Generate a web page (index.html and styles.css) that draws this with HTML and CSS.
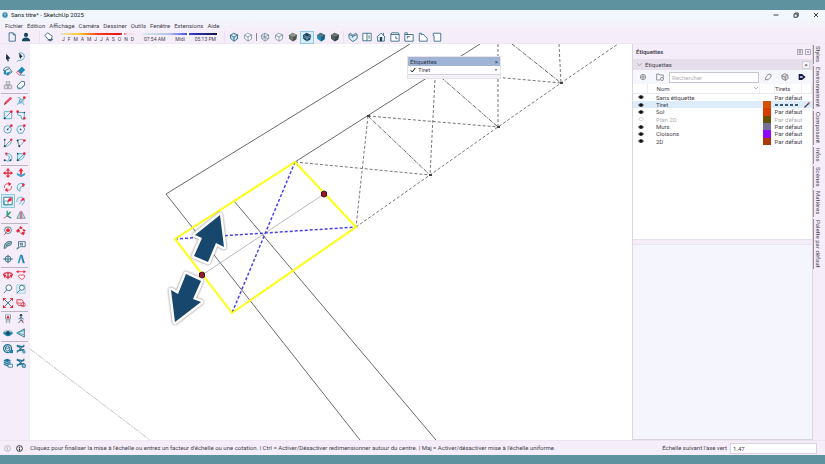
FILE: index.html
```html
<!DOCTYPE html>
<html lang="fr">
<head>
<meta charset="utf-8">
<title>Sans titre* - SketchUp 2025</title>
<link rel="stylesheet" href="styles.css">
</head>
<body>
<div class="window">
  <header class="titlebar">
    <svg class="logo" viewBox="0 0 12 12"><circle cx="6" cy="6" r="6" fill="#7fb4cb"/><path d="M6 1 10 3.500v5L6 11 2 8.500v-5z" fill="#1f7da6"/><path d="M3.500 4.500 6 3l2.500 1.500L6 6zM4 7l2 1.500L8 7" fill="none" stroke="#e8f6fc"/></svg>
    <h1>Sans titre* - SketchUp 2025</h1>
    <div class="window-buttons">
      <button aria-label="Réduire"><svg viewBox="0 0 12 12"><path d="M1 6h10" class="k"/></svg></button>
      <button aria-label="Restaurer"><svg viewBox="0 0 12 12"><path d="M2 4h6.500v6.500H2zM4 4V2h6.500v6.500H8.500" class="k"/></svg></button>
      <button aria-label="Fermer"><svg viewBox="0 0 12 12"><path d="m2 2 8 8m0-8-8 8" class="k"/></svg></button>
    </div>
  </header>

  <nav class="menubar">
    <button>Fichier</button><button>Édition</button><button>Affichage</button><button>Caméra</button><button>Dessiner</button><button>Outils</button><button>Fenêtre</button><button>Extensions</button><button>Aide</button>
  </nav>

  <div class="toolbar">
    <div class="group files">
      <button aria-label="Nouveau"><svg viewBox="0 0 12 12"><path d="M2.500 1h5l2.500 2.500V11H2.500zM7.500 1v2.500H10" class="n"/></svg></button>
      <button aria-label="Compte"><svg viewBox="0 0 12 12"><circle cx="6" cy="3.500" r="2.500" class="nf"/><path d="M1 11c0-3 2-4.500 5-4.500s5 1.500 5 4.500z" class="nf"/></svg></button>
    </div>
    <div class="group shadows">
      <button aria-label="Ombres"><svg viewBox="0 0 12 12"><path d="m4 10 4 1.500 3-2.500-3-3z" fill="#5d6f7d"/><path d="m1 4 3.500-3L10 5 8.500 9 5 9z" class="n" fill="#fff"/></svg></button>
      <div class="scale">
        <div class="ramp months"><i></i></div>
        <div class="ticks"><span>J</span><span>F</span><span>M</span><span>A</span><span>M</span><span>J</span><span>J</span><span>A</span><span>S</span><span>O</span><span>N</span><span>D</span></div>
      </div>
      <div class="scale hours-scale">
        <div class="ramp hours"><i></i></div>
        <div class="ticks"><span>07:54 AM</span><span>Midi</span><span>05:13 PM</span></div>
      </div>
    </div>
    <div class="group faces">
      <button aria-label="Rayons X"><svg viewBox="0 0 12 12"><path d="m1.500 4 4-2.500 5 2-.5 5-4 2.500-4-3zM1.500 4l4.500 2 4.500-2.500M6 6v5" class="n" fill="#bfe0ee"/></svg></button>
      <button aria-label="Arêtes arrière"><svg viewBox="0 0 12 12"><path d="m1.500 4 4-2.500 5 2-.5 5-4 2.500-4-3zM1.500 4l4.500 2 4.500-2.500M6 6v5" class="g" fill="#fff"/></svg></button>
      <span class="bar"></span>
      <button aria-label="Fil de fer"><svg viewBox="0 0 12 12"><path d="m1.500 4 4-2.500 5 2-.5 5-4 2.500-4-3zM1.500 4l4.500 2 4.500-2.500M6 6v5M5.500 1.500v5l-3 1.500m3-1.500L10 8.500" class="g"/></svg></button>
      <button aria-label="Lignes cachées"><svg viewBox="0 0 12 12"><path d="m1.500 4 4-2.500 5 2-.5 5-4 2.500-4-3zM1.500 4l4.500 2 4.500-2.500M6 6v5" class="g" fill="#fff"/></svg></button>
      <button aria-label="Ombré"><svg viewBox="0 0 12 12"><path d="m1 4 4.500-3L11 3.500 10 9l-4 2.500L1.500 8z" fill="#4b5654"/><path d="m1 4 4.500-3L11 3.500 6 6z" fill="#8e9990"/><path d="M6 6v5.500L1.500 8 1 4z" fill="#6c756c"/></svg></button>
      <button class="on" aria-label="Ombré avec textures"><svg viewBox="0 0 12 12"><path d="m1 4 4.500-3L11 3.500 10 9l-4 2.500L1.500 8z" fill="#173f5a"/><path d="m2 4 4 2 4.500-2.300M6 6v5M2 6l4 2 4-2" fill="none" stroke="#7fa9c0"/></svg></button>
      <button aria-label="Monochrome"><svg viewBox="0 0 12 12"><path d="m1 4 4.500-3L11 3.500 10 9l-4 2.500L1.500 8z" fill="#1f8cc0"/><path d="m1 4 4.500-3L11 3.500 6 6z" fill="#5d7582"/><path d="M6 6v5.500l4-2.500 1-5.500z" fill="#235d7d"/></svg></button>
      <button aria-label="Style photo"><svg viewBox="0 0 12 12"><path d="m1 4 4.500-3L11 3.500 10 9l-4 2.500L1.500 8z" fill="#35444b"/><path d="m1 4 4.500-3L11 3.500 6 6z" fill="#6a7775"/><path d="M6 6v5.500L1.500 8 1 4z" fill="#525d5d"/></svg></button>
    </div>
    <div class="group views">
      <button aria-label="Iso"><svg viewBox="0 0 12 12"><path d="M1 3 6 5l5-2v5l-5 3.500L1.500 8zM1 3l2-1.500L6 4l3-2.500L11 3M6 5l-1 2" class="n" fill="#dcecf4"/></svg></button>
      <button aria-label="Dessus"><svg viewBox="0 0 12 12"><path d="M1 1.500h10v9H1zM6 1.500v9M8.500 4v4" class="n" fill="#fff"/></svg></button>
      <button aria-label="Face"><svg viewBox="0 0 12 12"><path d="M1 6 6 1.500 11 6M2 5.500V11h8V5.500M9 1v2.500" class="n" fill="#fff"/><path d="M4.500 6h3v5h-3z" class="nf"/></svg></button>
      <button aria-label="Droite"><svg viewBox="0 0 12 12"><path d="M1 3h10v8H1zM1 3l1-2h8l1 2M7 5v3h2" class="n" fill="#fff"/></svg></button>
      <button aria-label="Arrière"><svg viewBox="0 0 12 12"><path d="M1 3h10v8H1zM1 3V1h3v2M7 5.500H4V8" class="n" fill="#fff"/></svg></button>
      <button aria-label="Gauche"><svg viewBox="0 0 12 12"><path d="M1.500 11V1.500H4v2l2-1 5 5V11z" class="n" fill="#fff"/></svg></button>
      <button aria-label="Dessous"><svg viewBox="0 0 12 12"><path d="M2.500 4.500V11h8V1.500h-9v3z" class="n" fill="#fff"/></svg></button>
    </div>
  </div>

  <main class="body">
    <aside class="tools">
      <div class="toolset">
        <button aria-label="Sélectionner"><svg viewBox="0 0 12 12"><path d="m4 2 5 6-2.500.2L7 11l-1.500.3-.5-2.500L3.500 9z" fill="#172f44"/></svg></button>
        <button aria-label="Lasso"><svg viewBox="0 0 12 12"><path d="M9 3c3 4-1 7-4 7-2 0-3 1-4 1.500M3 2c2-2 6-1 7 2" class="c"/><path d="m4 1 4 5-2 .3-.3 2L4 6z" fill="#172f44"/></svg></button>
        <button aria-label="Colorier"><svg viewBox="0 0 12 12"><path d="m3 5 5-2 3 4-5 4-3-1z" class="n" fill="#e4f2f8"/><path d="m4 8 6-2-4 5-2-1z" fill="#2f8db4"/><path d="M1 6c-1-4 4-6 7-4" class="n"/><path d="M1 5h2v5H1z" fill="#168db6"/></svg></button>
        <button aria-label="Effacer"><svg viewBox="0 0 12 12"><path d="m2 6 5-5 4 3.500L6 10z" fill="#168db6"/><path d="m2 6 4 4-2 1-3-3z" fill="#fff" class="r"/><path d="M5 11h6" class="c"/></svg></button>
        <button aria-label="Composant"><svg viewBox="0 0 12 12"><path d="M4 2h4v4H4zM1.500 6H6v4.500H1.500zM6 6h4.500v4.500H6z" fill="#dddbe2" stroke="#9f9da5"/></svg></button>
        <button aria-label="Étiqueter"><svg viewBox="0 0 12 12"><path d="m1.500 7 5-5.500L10 2l.5 4L6 10.500H2.500z" class="n" fill="#fff"/><path d="m2 9 4 1 4-4" class="c"/></svg></button>
      </div>
      <div class="toolset">
        <button aria-label="Ligne"><svg viewBox="0 0 12 12"><path d="m1 11 1.500-4L9 1l2 2-6.500 6z" fill="#e6536b"/><path d="m1 11 1.500-3.500L4 9z" fill="#75434c"/></svg></button>
        <button aria-label="Main levée"><svg viewBox="0 0 12 12"><path d="M2 2c8 0-2 6 4 5s-1 3 4 3M1 10c5-1 1-7 6-6" class="c"/><path d="m4 8 5-6 2 1-5 6-3 1z" fill="#7fb9cd"/><circle cx="10" cy="2" r="1.600" class="rf"/></svg></button>
        <button aria-label="Rectangle"><svg viewBox="0 0 12 12"><path d="M1.500 2h9v8.500h-9zM2 10l8-8" class="c"/><circle cx="10" cy="2" r="1.600" class="rf"/><circle cx="2" cy="10" r="1.200" class="nf"/></svg></button>
        <button aria-label="Rectangle pivoté"><svg viewBox="0 0 12 12"><path d="M2 3h8v7M2 3v3l4 1 1 4h3" class="c"/><circle cx="2" cy="2" r="1.600" class="rf"/><circle cx="10" cy="10" r="1.500" class="rf"/><circle cx="10" cy="3" r="1" class="nf"/></svg></button>
        <button aria-label="Cercle"><svg viewBox="0 0 12 12"><circle cx="5.500" cy="6.500" r="4.500" class="c"/><path d="m5.500 6.500 4-4" class="c"/><circle cx="10" cy="2" r="1.600" class="rf"/><circle cx="5.500" cy="6.500" r="1" class="nf"/></svg></button>
        <button aria-label="Polygone"><svg viewBox="0 0 12 12"><path d="m3 2.500 5-.5 2.500 4L8 11H3L1 6.500z" class="c"/><circle cx="10" cy="2" r="1.600" class="rf"/><circle cx="5.500" cy="6.500" r="1" class="nf"/></svg></button>
        <button aria-label="Arc"><svg viewBox="0 0 12 12"><path d="M2 2v8l8-8" class="g"/><path d="M10 3c0 4-3 7-8 7" class="c"/><circle cx="10" cy="2" r="1.400" class="rf"/><circle cx="2" cy="2" r="1" class="nf"/><circle cx="2" cy="10" r="1.200" class="nf"/></svg></button>
        <button aria-label="Arc par 2 points"><svg viewBox="0 0 12 12"><path d="M1.500 3C5 1 9 1 10 4L4 10zM1.500 3 4 10" class="g"/><circle cx="10" cy="3" r="1.600" class="rf"/><circle cx="2" cy="3" r="1.200" class="nf"/><circle cx="4" cy="10" r="1.200" class="nf"/></svg></button>
        <button aria-label="Arc par 3 points"><svg viewBox="0 0 12 12"><path d="M4 2c6-1 9 6 5 8M2 10c3 1 5 1 7 0M4 4c4 0 5 4 2 5" class="c"/><circle cx="4" cy="2" r="1.400" class="rf"/><circle cx="2" cy="10" r="1.200" class="nf"/><circle cx="9" cy="10" r="1.200" class="nf"/></svg></button>
        <button aria-label="Secteur"><svg viewBox="0 0 12 12"><path d="M2 2v8l8-8zM10 3c0 4-3 7-8 7" class="c" fill="#d7eef6"/><circle cx="10" cy="2" r="1.600" class="rf"/><circle cx="2" cy="10" r="1.200" class="nf"/><circle cx="2" cy="2" r="1" class="nf"/></svg></button>
      </div>
      <div class="toolset">
        <button aria-label="Déplacer"><svg viewBox="0 0 12 12"><path d="m6 0 2.500 3h-5zM6 12 3.500 9h5zM0 6l3-2.500v5zM12 6 9 8.500v-5z" class="rf"/><path d="M6 2v8M2 6h8" fill="none" stroke="#ed2338" stroke-width="1.500"/></svg></button>
        <button aria-label="Pousser"><svg viewBox="0 0 12 12"><path d="m1 6 5 2 5-2v2.500L6 11 1 8.500z" fill="#3aa7c9"/><path d="m6 0 3 4H7v4H5V4H3z" class="rf"/></svg></button>
        <button aria-label="Pivoter"><svg viewBox="0 0 12 12"><path d="M2 7c-1-3 1-5 5-5M10 5c1 3-1 5-5 5" class="r"/><path d="m6 0 4 2-3 3zM6 12 2 10l3-3z" class="rf"/></svg></button>
        <button aria-label="Suivez-moi"><svg viewBox="0 0 12 12"><path d="M10 2C4 0 0 4 2 9l3 2c-1-5 1-6 5-6" class="c" fill="#e1f4fa"/><path d="M7 1.500 11 3 8 6z" class="rf"/></svg></button>
        <button class="on" aria-label="Échelle"><svg viewBox="0 0 12 12"><path d="M1 1.500h10v9H1z" class="n" fill="#fff"/><path d="M1.500 6H6v4.500H1.500z" class="c"/><path d="m5 7 2-4 3-1 .5 3-3 2z" class="rf"/></svg></button>
        <button aria-label="Décalage"><svg viewBox="0 0 12 12"><path d="M1 7c0-8 10-7 9 0l-3 4M4 10c2-3 4-4 1-5" class="c"/><path d="m6 6 1-3 3-1v3z" class="rf"/></svg></button>
        <button aria-label="Axes"><svg viewBox="0 0 12 12"><path d="M5 1v6l5 3" fill="none" stroke="#28839f" stroke-width="1.500"/><path d="m5 7 4-5" stroke="#37a85b" stroke-width="2"/><path d="M5 7 1 10" class="r"/></svg></button>
        <button aria-label="Symétrie"><svg viewBox="0 0 12 12"><path d="M5 2v8H1zM7 2v8h4z" class="g" fill="#c5dce6"/><path d="M6 1v10" class="r"/></svg></button>
      </div>
      <div class="toolset">
        <button aria-label="Mètre"><svg viewBox="0 0 12 12"><circle cx="6" cy="5" r="4" class="n" fill="#fff"/><circle cx="6" cy="5" r="2.300" class="rf"/><path d="m1 11 3-3" class="r"/></svg></button>
        <button aria-label="Cotation"><svg viewBox="0 0 12 12"><path d="m2 5 3-3 5 3M3 6l4 4 3-3" class="g"/><path d="m0 6 3-3 2 3-3 2zM9 11 6 9l2-2 3 1zM5 0l3 2-2 2-2-2zM9 4l3 1-2 2-2-1z" class="rf"/></svg></button>
        <button aria-label="Rapporteur"><svg viewBox="0 0 12 12"><path d="M1.500 10C1 4 5 1 10 2c1 4-2 5-4 5s-2 4-4.500 3z" class="n" fill="#9db6c2"/><path d="M4 7c1-2 2-3 4-3" class="n"/></svg></button>
        <button aria-label="Texte"><svg viewBox="0 0 12 12"><path d="M3 2h8v6H5l-4 3 2-3zM5 4v2h3V4z" class="n" fill="#fff"/></svg></button>
        <button aria-label="Plan de section"><svg viewBox="0 0 12 12"><circle cx="6" cy="6" r="3.500" class="n" fill="#dce8ed"/><path d="M0 6h12M6 1v10" class="n"/></svg></button>
        <button aria-label="Texte 3D"><svg viewBox="0 0 12 12"><path d="M2 11 5 1h2l3 10H8L6 4 4 11z" fill="#2d9fc4"/><path d="m7 1 3 10" class="n"/></svg></button>
      </div>
      <div class="toolset">
        <button aria-label="Orbite"><svg viewBox="0 0 12 12"><path d="M1 6c0-4 10-4 10 0M3 8c2 1 4 1 6 0M6 2v9" fill="none" stroke="#df3446" stroke-width="1.500"/><path d="m0 5 4 1-2 4zM12 5 8 6l2 4z" class="rf"/></svg></button>
        <button aria-label="Panoramique"><svg viewBox="0 0 12 12"><path d="M1 2h9" class="r"/><path d="m0 2 3-2v4zM12 2 9 0v4z" class="rf"/><path d="M4 6h6v3l-2 2H6L3 8z" class="r" fill="#fff"/></svg></button>
        <button aria-label="Zoom"><svg viewBox="0 0 12 12"><circle cx="7" cy="4.500" r="3.500" class="n" fill="#fff"/><path d="M4.500 7 1 11" class="n"/></svg></button>
        <button aria-label="Zoom fenêtre"><svg viewBox="0 0 12 12"><path d="M1 1h10v10H1z" fill="#e6f4f9" stroke="#94cddd"/><circle cx="7" cy="4.500" r="3" class="n" fill="#fff"/><path d="M5 7 1 11" class="n"/></svg></button>
        <button aria-label="Zoom étendu"><svg viewBox="0 0 12 12"><path d="m2 2 8 8M10 2l-8 8" class="n"/><path d="M0 0h4L0 4zM12 0v4L8 0zM0 12V8l4 4zM12 12H8l4-4z" class="rf"/></svg></button>
        <button aria-label="Précédent"><svg viewBox="0 0 12 12"><path d="M1 2h6l2 3v4H3L1 6zM1 6h5" class="r" fill="#f6e6ef"/><circle cx="8.500" cy="8" r="2.500" class="r"/></svg></button>
      </div>
      <div class="toolset">
        <button aria-label="Caméra"><svg viewBox="0 0 12 12"><path d="M3 1h6v5H3zM4 6v5M8 6v5M6 6v4" class="g" fill="#fff"/><circle cx="6" cy="4" r="1.600" class="rf"/></svg></button>
        <button aria-label="Marcher"><svg viewBox="0 0 12 12"><circle cx="6" cy="1.500" r="1.500" class="nf"/><path d="M6 3v4l3 4M6 7l-3 4M3 6l3-2 3 2" class="n"/><path d="M8 7v3" class="r"/></svg></button>
        <button aria-label="Pivoter la caméra"><svg viewBox="0 0 12 12"><path d="M0 6c3-5 9-5 12 0-3 5-9 5-12 0z" fill="#1884ae"/><path d="M1 5c3-4 7-4 10 0z" fill="#b8cbd4"/><circle cx="6" cy="6" r="2.300" class="nf"/></svg></button>
        <button aria-label="Section"><svg viewBox="0 0 12 12"><path d="M10 1v10L1 6z" class="n" fill="#d8edf5"/><path d="m1 6 9-3M1 6l9 2" class="c"/></svg></button>
      </div>
      <div class="toolset">
        <button aria-label="3D Warehouse"><svg viewBox="0 0 12 12"><circle cx="5.500" cy="5.500" r="4.800" fill="#d5e9f1" stroke="#206e93" stroke-width="1.400"/><path d="m3 4 2.500-1.500L8 4v3L5.500 8.500 3 7zM3 4l2.500 1.500L8 4" class="n"/><path d="M8 7h4v4H8z" fill="#1a83ad"/></svg></button>
        <button aria-label="Extension Warehouse"><svg viewBox="0 0 12 12"><path d="m1 1 9 9M10 1 1 10M1 3c3-2 6 1 9 0M1 8c4 1 6-2 9-1" fill="none" stroke="#246f92" stroke-width="1.500"/><circle cx="9.500" cy="9.500" r="2" fill="#4d9fbf"/></svg></button>
        <button aria-label="Partager"><svg viewBox="0 0 12 12"><path d="M1 2.500 5 1l4 1.500v6L5 10 1 8.500z" fill="#247598"/><path d="m1 4 4 1.500L9 4M1 6.500 5 8l4-1.500" fill="none" stroke="#a9d2e3"/><path d="M6 7.500h5.500v3.500H6z" fill="#fff" stroke="#2a759b"/></svg></button>
        <button aria-label="Gestionnaire d'extensions"><svg viewBox="0 0 12 12"><path d="m1 1 9 9M10 1 1 10M1 3c3-2 6 1 9 0M1 8c4 1 6-2 9-1" fill="none" stroke="#246f92" stroke-width="1.500"/><circle cx="9.500" cy="9.500" r="2.300" fill="#8cb9cc" stroke="#2f7999"/></svg></button>
      </div>
    </aside>

    <section class="canvas">
      <svg class="model" viewBox="30 44 602 396" preserveAspectRatio="xMinYMin slice">
        <g class="edge">
          <path d="M410 44 166 194 360 440"/>
          <path d="m234 201 202 239"/>
          <path d="M295 162 480 44"/>
        </g>
        <g class="dashed">
          <path d="m295 162 135 13"/>
          <path d="m368 116-12 111"/>
          <path d="m368 116 130 11"/>
          <path d="m436 60-6 115"/>
          <path d="M498 44v83"/>
          <path d="m438 72 123 11"/>
          <path d="m559 44 2 39"/>
          <path d="m356 227 74-52 68-48 63-44 57-39"/>
        </g>
        <g class="dashdot">
          <path d="m368 116 62 59"/>
          <path d="m436 73 62 54"/>
          <path d="m512 44 49 39"/>
        </g>
        <path class="node" d="M367 115h3v2h-3zM429 174h3v2h-3zM497 126h3v2h-3zM560 82h3v2h-3z"/>
        <path class="guide" d="m30 349 120 91"/>
        <path class="axis" d="m202 275 122-81"/>
        <path class="inner" d="m175 239 181-12M295 162l-63 151"/>
        <path class="selection" d="m175 239 120-77 61 65-124 86z"/>
        <g class="handle">
          <path d="m324 191 2.500 1v4l-2.500 1-2.500-1v-4z"/>
          <path d="m202 272 2.500 1v4l-2.500 1-2.500-1v-4z"/>
        </g>
        <g class="arrow">
          <path d="m220 215 4 32-8-4-8 19-14-6 8-18-7-3z"/>
          <path d="m186 274 15 7-8 18 8 3-26 20-4-32 7 4z"/>
        </g>
      </svg>

      <div class="floating">
        <div class="floating-title"><span>Étiquettes</span><button aria-label="Fermer la palette">×</button></div>
        <div class="floating-field">
          <svg viewBox="0 0 12 12"><path d="m1.500 6.500 3 3.500 6-8" fill="none" stroke="#111" stroke-width="2"/></svg>
          <select aria-label="Étiquette active"><option>Tiret</option></select>
          <svg class="caret" viewBox="0 0 12 12"><path d="M2 4h8L6 9z" fill="#555"/></svg>
        </div>
      </div>
    </section>

    <aside class="tray">
      <div class="tray-title">
        <h2>Étiquettes</h2>
        <button aria-label="Épingler"><svg viewBox="0 0 12 12"><path d="M1 1h10v10H1zM4 3h4v4H4zM6 7v3" class="k"/></svg></button>
        <button aria-label="Fermer le panneau"><svg viewBox="0 0 12 12"><path d="M1 1h10v10H1zM4 4l4 4M8 4 4 8" class="k"/></svg></button>
      </div>
      <div class="tray-section">
        <svg viewBox="0 0 12 12"><path d="m1 3 5 6 5-6" class="k"/></svg>
        <h3>Étiquettes</h3>
        <button aria-label="Fermer la section">×</button>
      </div>
      <div class="tray-tools">
        <button aria-label="Ajouter"><svg viewBox="0 0 12 12"><circle cx="6" cy="6" r="4" class="k"/><path d="M6 3v6M3 6h6" class="k"/></svg></button>
        <button aria-label="Ajouter un dossier"><svg viewBox="0 0 12 12"><path d="M6 10.500H1v-9h3.500l1 1.500H11v4" class="k"/><circle cx="9" cy="9" r="2.300" class="k"/></svg></button>
        <input type="search" placeholder="Rechercher" aria-label="Rechercher">
        <button aria-label="Étiqueter"><svg viewBox="0 0 12 12"><path d="m2 8 4-6h4.500v4L6 10H3zM1 11l2-2" class="k"/></svg></button>
        <button aria-label="Couleur par étiquette"><svg viewBox="0 0 12 12"><path d="m1 4 4-3 5 2 1 5-4 3-5-2z" fill="#ddd"/><path d="m1 4 4-3 5 2 1 5-4 3-5-2zM1 4l5 2 4-3M6 6l1 5" class="k"/></svg></button>
        <button aria-label="Détails"><svg viewBox="0 0 12 12"><path d="M1 1.500h5L11.500 6 6 10.500H1z" fill="#151a48"/><path d="M3 6h4" stroke="#fff" stroke-width="2"/></svg></button>
      </div>
      <div class="tag-list">
        <table>
          <thead><tr><th class="eye"></th><th class="name"><span>Nom <svg viewBox="0 0 12 12"><path d="m2 4 4 4 4-4" class="k"/></svg></span></th><th class="color"></th><th class="dash">Tirets</th><th class="pen"></th></tr></thead>
          <tbody>
            <tr><td><svg viewBox="0 0 12 12"><path d="M0 6c3-5 9-5 12 0-3 5-9 5-12 0z" fill="#555"/><circle cx="6" cy="6" r="3" fill="#111"/></svg></td><td>Sans étiquette</td><td></td><td>Par défaut</td><td></td></tr>
            <tr class="active"><td><svg viewBox="0 0 12 12"><path d="M0 6c3-5 9-5 12 0-3 5-9 5-12 0z" fill="#555"/><circle cx="6" cy="6" r="3" fill="#111"/></svg></td><td>Tiret</td><td class="orange"></td><td><div class="dash-sample"></div></td><td><svg class="pencil" viewBox="0 0 12 12"><path d="m1 11 9-9" stroke="#513a49" stroke-width="2.500"/><path d="m8 4 3-3" stroke="#c54152" stroke-width="2.500"/></svg></td></tr>
            <tr><td><svg viewBox="0 0 12 12"><path d="M0 6c3-5 9-5 12 0-3 5-9 5-12 0z" fill="#555"/><circle cx="6" cy="6" r="3" fill="#111"/></svg></td><td>Sol</td><td class="red"></td><td>Par défaut</td><td></td></tr>
            <tr class="hidden-tag"><td><svg viewBox="0 0 12 12"><path d="M1 6c3-4 7-4 10 0-3 4-7 4-10 0z" fill="none" stroke="#aaa"/></svg></td><td>Plan 2D</td><td class="olive"></td><td>Par défaut</td><td></td></tr>
            <tr><td><svg viewBox="0 0 12 12"><path d="M0 6c3-5 9-5 12 0-3 5-9 5-12 0z" fill="#555"/><circle cx="6" cy="6" r="3" fill="#111"/></svg></td><td>Murs</td><td class="slate"></td><td>Par défaut</td><td></td></tr>
            <tr><td><svg viewBox="0 0 12 12"><path d="M0 6c3-5 9-5 12 0-3 5-9 5-12 0z" fill="#555"/><circle cx="6" cy="6" r="3" fill="#111"/></svg></td><td>Cloisons</td><td class="violet"></td><td>Par défaut</td><td></td></tr>
            <tr><td><svg viewBox="0 0 12 12"><path d="M0 6c3-5 9-5 12 0-3 5-9 5-12 0z" fill="#555"/><circle cx="6" cy="6" r="3" fill="#111"/></svg></td><td>2D</td><td class="rust"></td><td>Par défaut</td><td></td></tr>
          </tbody>
        </table>
      </div>
      <div class="tray-rest"></div>
    </aside>

    <nav class="tabs">
      <button>Styles</button><button>Environnement</button><button>Composant</button><button>Infos</button><button>Scènes</button><button>Matières</button><button>Palette par défaut</button>
    </nav>
  </main>

  <footer class="status">
    <svg viewBox="0 0 12 12"><circle cx="6" cy="6" r="5" fill="none" stroke="#999"/><path d="M6 9V4L4.500 5" fill="none" stroke="#999"/></svg>
    <svg viewBox="0 0 12 12"><circle cx="6" cy="6" r="5" fill="none" stroke="#222" stroke-width="1.500"/><circle cx="6" cy="4" r="1.200" fill="#222"/><path d="M5 6h2v3.500H5z" fill="#222"/></svg>
    <p>Cliquez pour finaliser la mise à l'échelle ou entrez un facteur d'échelle ou une cotation. | Ctrl = Activer/Désactiver redimensionner autour du centre. | Maj = Activer/désactiver mise à l'échelle uniforme.</p>
    <label for="measure">Échelle suivant l'axe vert</label>
    <input id="measure" type="text" value="1.47">
  </footer>
</div>
</body>
</html>
```
FILE: styles.css
```css
* { box-sizing: border-box; }

body {
  margin: 0;
  font: 6px/8px Roboto, "Noto Sans", sans-serif;
  color: #45424d;
  background: #5d929e;
}

button, input, select {
  margin: 0;
  padding: 0;
  border: 0;
  background: none;
  font: inherit;
  color: inherit;
}

h1, h2, h3, p { margin: 0; font: inherit; }
svg { display: block; flex: none; }

.k { fill: none; stroke: #65626c; stroke-width: 1; }
.n { stroke: #2b617e; stroke-width: 1; }
.g { stroke: #7890a0; stroke-width: 1; }
.c { stroke: #3ba4bf; stroke-width: 1; }
.r { stroke: #df3446; stroke-width: 1; }
.n:not([fill]), .g:not([fill]), .c:not([fill]), .r:not([fill]) { fill: none; }
.nf { fill: #174866; }
.rf { fill: #ed2338; }

.window {
  display: flex;
  flex-direction: column;
  min-height: 100vh;
  border-top: 10px solid #5d929e;
  border-bottom: 9px solid #5d929e;
  background: #f5eefa;
}

.titlebar {
  display: flex;
  align-items: center;
  gap: 3px;
  height: 10px;
  padding-left: 2px;
  background: #f2f6fd;
}
.logo { width: 6px; height: 6px; }
.titlebar h1 { flex: 1; color: #222; }
.window-buttons { display: flex; gap: 14px; padding-right: 6px; }
.window-buttons svg { width: 6px; height: 6px; }
.window-buttons .k { stroke: #444; stroke-width: 2; }

.menubar {
  display: flex;
  gap: 4px;
  height: 11px;
  padding-left: 5px;
  background: linear-gradient(#f3f4fc, #f5effa);
}

.toolbar {
  display: flex;
  align-items: center;
  height: 13px;
  border-bottom: 1px solid #efe9f3;
}
.toolbar svg { width: 10px; height: 10px; }
.group { display: flex; align-items: center; height: 13px; }
.group + .group { border-left: 1px solid #e9e1ee; }
.files { gap: 4px; padding: 0 8px 0 7px; }
.shadows { padding: 0 7px 0 4px; }
.scale { width: 74px; margin-left: 7px; font-size: 5px; line-height: 6px; }
.hours-scale { margin-left: 8px; }
.ramp { display: flex; height: 2px; }
.ramp i { width: 2px; height: 4px; margin-top: -1px; background: #fff; }
.months { padding-left: 61px; background: linear-gradient(90deg, #efe3c9, #fbc72e 25%, #fa3c1c 50%, #e31217 80%, #f8dce2 90%, #f5e5ed); }
.hours { padding-left: 44px; background: linear-gradient(90deg, #d7e6ee, #b5c7e7 35%, #4349ec 60%, #3031c0 70%, #111637); }
.ticks { display: flex; justify-content: space-between; padding: 1px 1px 0; }
.faces { padding: 0 1px 0 2px; }
.views { padding-left: 2px; }
.faces button, .views button { display: grid; place-items: center; width: 14px; height: 13px; }
.faces .bar { width: 1px; height: 8px; margin: 0 1px; background: #8c8793; }
.faces .on, .tools .on { background: #d7edf8; outline: 1px solid #91cbe2; outline-offset: -1px; }

.body { display: flex; flex: 1; }

.tools { width: 30px; padding: 6px 1px 0; border-right: 1px solid #f1ebf5; }
.toolset { display: grid; grid-template-columns: 1fr 1fr; grid-auto-rows: 14px; }
.toolset + .toolset { margin-top: 1px; border-top: 1px solid #bbb5c1; }
.toolset button { display: grid; place-items: center; }
.toolset svg { width: 10px; height: 10px; }

.canvas { position: relative; flex: 1; overflow: hidden; background: #fff; }
.model { position: absolute; inset: 0; width: 100%; height: 100%; }
.model path { fill: none; }
.edge { stroke: #6a6a6a; stroke-width: 1; }
.dashed { stroke: #777; stroke-dasharray: 3 2; }
.dashdot { stroke: #666; stroke-dasharray: 4 1 1 1; }
.model .node { fill: #444; }
.guide { stroke: #c3c3cf; stroke-dasharray: 6 1 2 1; }
.axis { stroke: #bbb; stroke-width: 1; }
.inner { stroke: #4a42e8; stroke-width: 1.5; stroke-dasharray: 3 2; }
.selection { stroke: #ffff12; stroke-width: 2; }
.model .handle path { fill: #9c1825; stroke: #401019; }
.model .arrow path { fill: #17476c; stroke: #fff; stroke-width: 5; stroke-linejoin: round; paint-order: stroke; }
.arrow { filter: drop-shadow(0 0 1px #77717d); }

.floating { position: absolute; top: 12px; left: 377px; width: 94px; height: 23px; border: 1px solid #e6e3eb; background: #f4f1f8; }
.floating-title { display: flex; justify-content: space-between; align-items: center; height: 9px; padding: 0 2px; background: #a2b4d5; color: #263450; }
.floating-field { display: flex; align-items: center; gap: 2px; height: 9px; padding: 0 2px; border-bottom: 1px solid #d5d1db; background: #fff; }
.floating-field svg { width: 6px; height: 6px; }
.floating-field .caret { width: 4px; height: 4px; }
.floating-field select { flex: 1; height: 8px; appearance: none; line-height: 8px; }

.tray { display: flex; flex-direction: column; width: 181px; border-left: 1px solid #dcd5e1; border-right: 1px solid #dcd5e1; }
.tray-title { display: flex; align-items: center; gap: 2px; height: 15px; padding: 1px 1px 0 3px; }
.tray-title h2 { flex: 1; font-weight: 600; }
.tray-title svg { width: 6px; height: 6px; }
.tray-section { display: flex; align-items: center; gap: 3px; height: 11px; padding: 0 2px 0 4px; background: #e5dfeb; }
.tray-section svg { width: 5px; height: 5px; }
.tray-section h3 { flex: 1; }
.tray-section button { width: 8px; height: 8px; border: 1px solid #d3cdd8; background: #f8f5fa; line-height: 5px; }
.tray-tools { display: flex; align-items: center; gap: 9px; height: 14px; padding: 0 6px; background: #f6f6fd; }
.tray-tools svg { width: 8px; height: 8px; }
.tray-tools input { flex: 1; min-width: 0; height: 11px; margin: 0 -4px; padding: 0 2px; border: 1px solid #c9c5cf; background: #fff; appearance: none; }
.tray-tools input::placeholder { color: #b4b0b8; }

.tag-list { height: 156px; border-bottom: 1px solid #e5e1ec; background: #fff; }
table { width: 100%; height: 61px; border-collapse: collapse; table-layout: fixed; }
th, td { padding: 0; font-weight: 400; text-align: left; line-height: 7px; white-space: nowrap; }
th { height: 9px; border-bottom: 1px solid #ece8f1; border-right: 1px solid #eeebf3; }
.eye { width: 14px; }
.color { width: 15px; }
.dash { width: 27px; }
.pen { width: 10px; }
th.name, td:nth-child(2) { padding-left: 9px; }
th.name span { display: flex; justify-content: space-between; align-items: center; }
th svg { width: 6px; height: 6px; }
td svg { width: 6px; height: 6px; margin-left: 5px; }
td .pencil { margin-left: 2px; }
td:nth-child(3) { background-clip: content-box; padding: 0 4px 0 3px; }
.active { background: #dcecfb; }
.hidden-tag { color: #b2afb6; }
.orange { background-color: #d15206; }
.red { background-color: #d53d04; }
.olive { background-color: #665006; }
.slate { background-color: #77719a; }
.violet { background-color: #8d08fc; }
.rust { background-color: #a83b08; }
.dash-sample { width: 25px; height: 2px; background: repeating-linear-gradient(90deg, #3c5873 0 3px, transparent 3px 5px); }
.tray-rest { flex: 1; margin-top: 4px; border-top: 1px solid #e8e4f0; border-bottom: 1px solid #d8d3df; background: #f5f5fd; }

.tabs { display: flex; flex-direction: column; align-items: flex-start; gap: 2px; width: 12px; padding-top: 1px; }
.tabs button { padding: 1px 0 2px; border-left: 1px solid #96919d; writing-mode: vertical-rl; line-height: 9px; }

.status { display: flex; align-items: center; height: 15px; padding: 0 8px 0 4px; border-top: 1px solid #ece6f1; }
.status svg { width: 7px; height: 7px; margin-right: 5px; }
.status p { flex: 1; margin-left: 2px; white-space: nowrap; }
.status label { margin-right: 3px; }
.status input { width: 87px; height: 11px; padding: 0 2px; border: 1px solid #d9d3df; background: #fff; }
```
